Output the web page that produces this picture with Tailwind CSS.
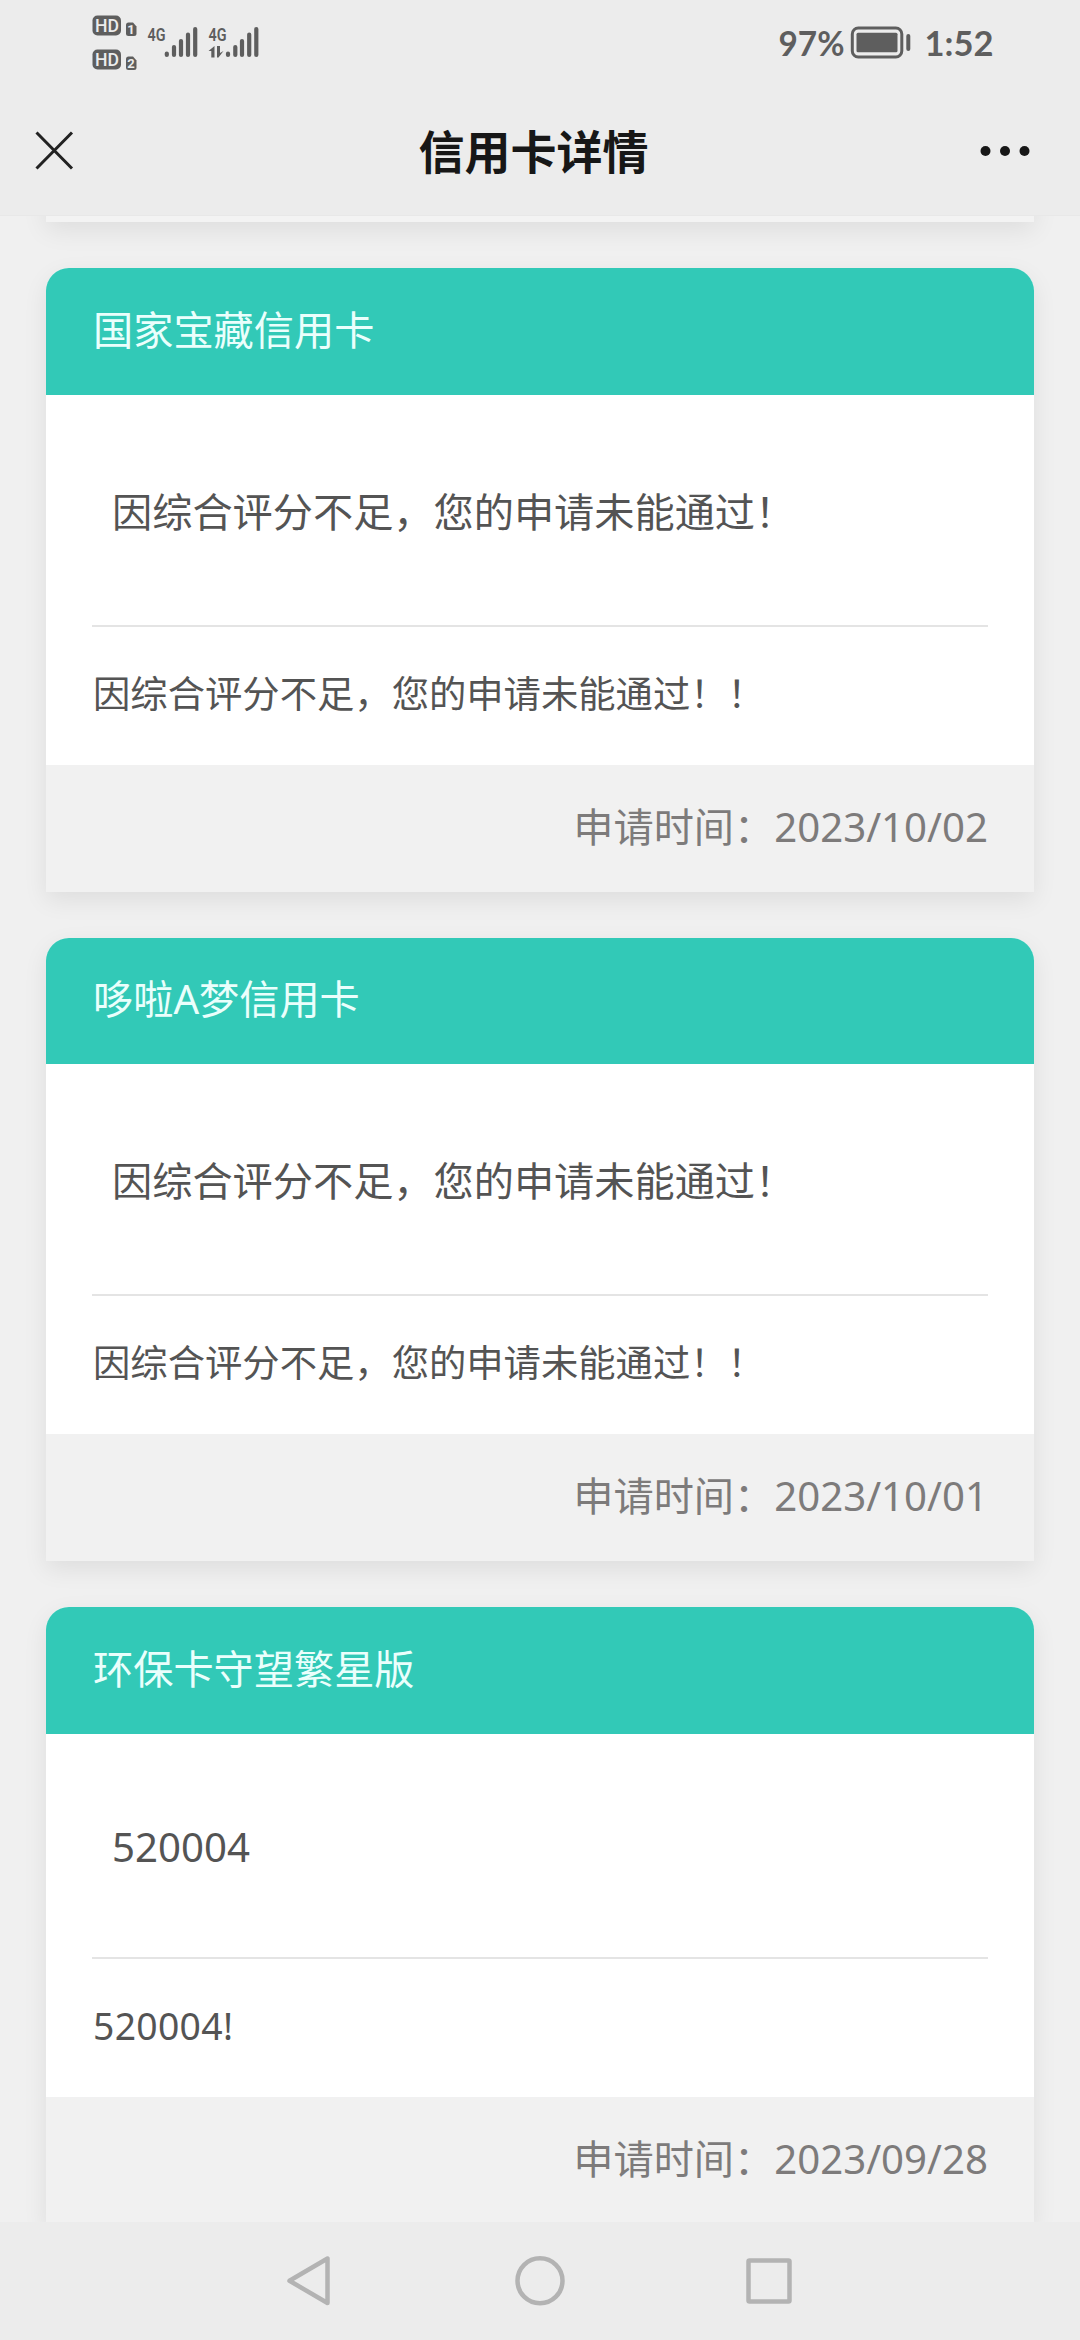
<!DOCTYPE html>
<html lang="zh-CN">
<head>
<meta charset="utf-8">
<title>信用卡详情</title>
<script src="https://cdn.jsdelivr.net/npm/@tailwindcss/browser@4"></script>
</head>
<body class="flex h-[2340px] w-[1080px] flex-col overflow-hidden bg-[#f0f0f0] font-['Noto_Sans','Noto_Sans_CJK_SC',sans-serif] text-[#545454]">
  <header class="relative z-10 h-[216px] shrink-0 border-b border-[#e8e8e8] bg-[#ececec]">
    <!-- status bar -->
    <svg class="block h-[88px] w-full" viewBox="0 0 1080 88" fill="#5e5e5e">
      <rect x="92.5" y="15.5" width="28.5" height="20" rx="5"/>
      <rect x="92.5" y="49.5" width="28.5" height="20" rx="5"/>
      <g fill="#ececec" font-family="Roboto, sans-serif" font-weight="500" font-size="19">
        <text x="95" y="32.3" textLength="24" lengthAdjust="spacingAndGlyphs">HD</text>
        <text x="95" y="66.3" textLength="24" lengthAdjust="spacingAndGlyphs">HD</text>
      </g>
      <path d="M128.500 22.500h4.500l3.500 4v7q0 2.500-2.500 2.500h-5.500q-2.500 0-2.500-2.500v-8.500q0-2.500 2.500-2.500z"/>
      <path d="M128.500 56.500h4.500l3.500 4v7q0 2.500-2.500 2.500h-5.500q-2.500 0-2.500-2.500v-8.500q0-2.500 2.500-2.500z"/>
      <g fill="#ececec" font-family="Roboto, sans-serif" font-weight="700" font-size="13" text-anchor="middle">
        <text x="131" y="34.300">1</text>
        <text x="131" y="68.300">2</text>
      </g>
      <g font-family="Roboto, sans-serif" font-weight="600" font-size="19">
        <text x="147.500" y="40.500" textLength="18" lengthAdjust="spacingAndGlyphs">4G</text>
        <text x="208.500" y="40.500" textLength="18" lengthAdjust="spacingAndGlyphs">4G</text>
      </g>
      <g stroke="#5e5e5e" stroke-width="4.200" stroke-linecap="round">
        <path d="M166.800 53.500v1.500M174 47v8M181 41v14M188 34.500v20.500M195.200 29v26"/>
        <path d="M228 53.500v1.500M235.300 47v8M242 41v14M249.200 34.500v20.500M256.300 29v26"/>
      </g>
      <path d="M214.500 46v11.500h-3.200v-6.500h-2.800zM217 46h3v7l3.500-2-5 6.500h-1.500z"/>
      <g font-family="Lato, sans-serif" font-weight="700" font-size="35">
        <text x="778.500" y="56" textLength="66" lengthAdjust="spacingAndGlyphs">97%</text>
        <text x="924.500" y="56" textLength="69" lengthAdjust="spacingAndGlyphs">1:52</text>
      </g>
      <rect x="852.300" y="28" width="49.500" height="29" rx="6" fill="none" stroke="#5e5e5e" stroke-width="3"/>
      <rect x="856.500" y="32.700" width="41" height="19.600" rx="1.500"/>
      <rect x="906.300" y="34" width="4" height="17" rx="2"/>
    </svg>
    <!-- title bar -->
    <div class="flex h-[125px] items-center justify-between pr-[49px] pl-[34px]">
      <svg class="h-10 w-10" viewBox="0 0 40 40" fill="none" stroke="#222" stroke-width="3"><path d="M2.500 1.500l35.500 36M38 1.500l-35.500 36"/></svg>
      <h1 class="pl-[13px] text-[46px] leading-[60px] font-bold text-[#171717]">信用卡详情</h1>
      <svg class="h-3 w-[51px]" viewBox="0 0 51 12" fill="#171717"><circle cx="5.500" cy="6" r="5"/><circle cx="25" cy="6" r="5"/><circle cx="44.500" cy="6" r="5"/></svg>
    </div>
  </header>

  <main class="flex min-h-0 flex-1 flex-col gap-[46px] overflow-hidden px-[46px]">
    <div class="-mt-20 h-[86px] shrink-0 bg-[#f3f3f3] shadow-[0_8px_24px_rgba(0,0,0,0.08)]"></div>

    <article class="flex h-[624px] shrink-0 flex-col rounded-t-[23px] bg-white shadow-[0_8px_24px_rgba(0,0,0,0.08)]">
      <h2 class="flex h-[127px] items-center rounded-t-[23px] bg-[#32c9b7] px-[47px] pb-[3px] text-[40.200px] text-[#eafffc]">国家宝藏信用卡</h2>
      <div class="mx-[46px] flex h-[232px] items-center border-b-2 border-[#e4e4e4] px-5 pt-[5px] text-[40.200px]">因综合评分不足，您的申请未能通过！</div>
      <p class="flex flex-1 items-center px-[47px] pb-1 text-[37.330px]">因综合评分不足，您的申请未能通过！！</p>
      <footer class="flex h-[127px] items-center justify-end bg-[#f1f1f1] px-[46px] pb-0.5 text-[40.200px] text-[#7d7b7b]">申请时间：2023/10/02</footer>
    </article>

    <article class="flex h-[623px] shrink-0 flex-col rounded-t-[23px] bg-white shadow-[0_8px_24px_rgba(0,0,0,0.08)]">
      <h2 class="flex h-[126px] items-center rounded-t-[23px] bg-[#32c9b7] px-[47px] pb-[3px] text-[40.200px] text-[#eafffc]">哆啦A梦信用卡</h2>
      <div class="mx-[46px] flex h-[232px] items-center border-b-2 border-[#e4e4e4] px-5 pt-[5px] text-[40.200px]">因综合评分不足，您的申请未能通过！</div>
      <p class="flex flex-1 items-center px-[47px] pb-1 text-[37.330px]">因综合评分不足，您的申请未能通过！！</p>
      <footer class="flex h-[127px] items-center justify-end bg-[#f1f1f1] px-[46px] pb-0.5 text-[40.200px] text-[#7d7b7b]">申请时间：2023/10/01</footer>
    </article>

    <article class="flex h-[617px] shrink-0 flex-col rounded-t-[23px] bg-white shadow-[0_8px_24px_rgba(0,0,0,0.08)]">
      <h2 class="flex h-[127px] items-center rounded-t-[23px] bg-[#32c9b7] px-[47px] pb-[3px] text-[40.200px] text-[#eafffc]">环保卡守望繁星版</h2>
      <div class="mx-[46px] flex h-[225px] items-center border-b-2 border-[#e4e4e4] px-5 pt-[3px] text-[40.200px]">520004</div>
      <p class="flex flex-1 items-center px-[47px] pb-1 text-[37.330px] tracking-[0.3px]">520004!</p>
      <footer class="flex h-[127px] items-center justify-end bg-[#f1f1f1] px-[46px] pb-0.5 text-[40.200px] text-[#7d7b7b]">申请时间：2023/09/28</footer>
    </article>
  </main>

  <nav class="relative z-10 h-[118px] shrink-0 bg-[#ececec]">
    <svg class="block h-full w-full" viewBox="0 0 1080 118" fill="none" stroke="#b3b3b3" stroke-width="4.500" stroke-linejoin="round">
      <path d="M327.500 36.500v44.500L289.500 58.800z"/>
      <circle cx="540" cy="58.800" r="22.500"/>
      <rect x="748.500" y="38.500" width="41" height="41" rx="1"/>
    </svg>
  </nav>
</body>
</html>
